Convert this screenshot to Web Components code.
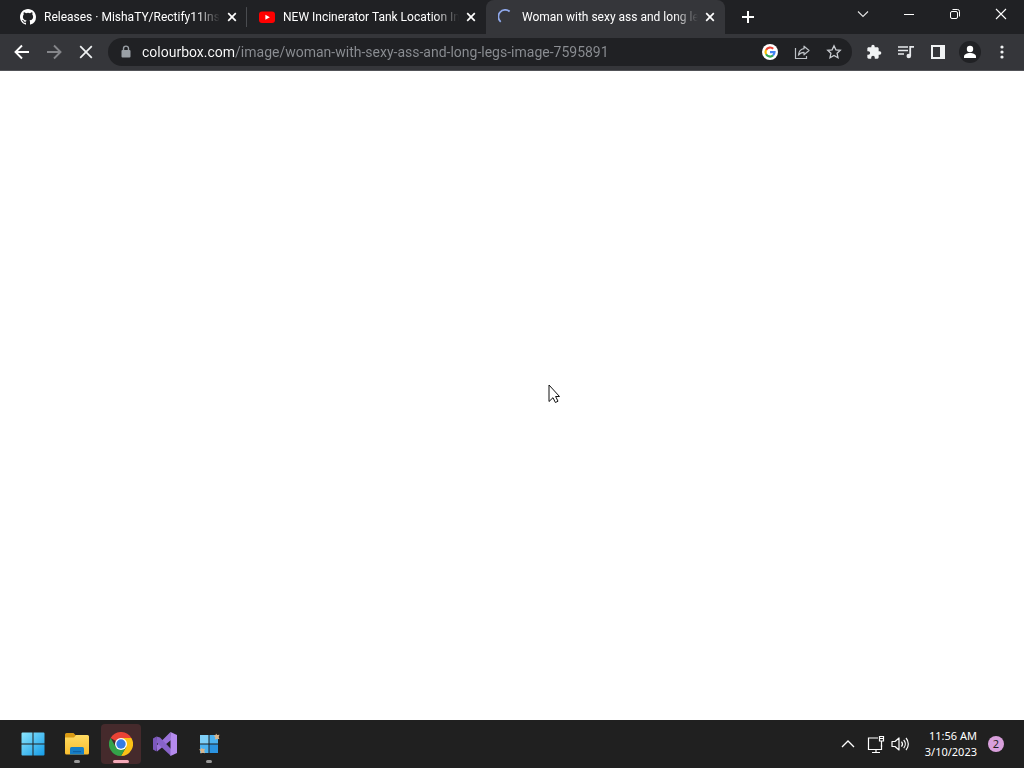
<!DOCTYPE html>
<html lang="en">
<head>
<meta charset="utf-8">
<title>Browser</title>
<style>
  html, body { margin: 0; height: 100%; }
  body { font-family: Roboto, "Noto Sans", sans-serif; background: #fff; }
</style>
</head>
<body>
<desktop-screen></desktop-screen>
<script>
const ICONS = {
  github: [16, '<path fill="#fff" d="M8 0C3.58 0 0 3.58 0 8c0 3.54 2.29 6.53 5.47 7.59.4.07.55-.17.55-.38 0-.19-.01-.82-.01-1.49-2.01.37-2.53-.49-2.69-.94-.09-.23-.48-.94-.82-1.13-.28-.15-.68-.52-.01-.53.63-.01 1.08.58 1.23.82.72 1.21 1.87.87 2.33.66.07-.52.28-.87.51-1.07-1.78-.2-3.64-.89-3.64-3.95 0-.87.31-1.59.82-2.15-.08-.2-.36-1.02.08-2.12 0 0 .67-.21 2.2.82a7.6 7.6 0 0 1 4 0c1.53-1.04 2.2-.82 2.2-.82.44 1.1.16 1.92.08 2.12.51.56.82 1.27.82 2.15 0 3.07-1.87 3.75-3.65 3.95.29.25.54.73.54 1.48 0 1.07-.01 1.93-.01 2.2 0 .21.15.46.55.38A8 8 0 0 0 16 8c0-4.42-3.58-8-8-8z"/>'],
  youtube: [16, '<rect y="2.5" width="16" height="11.5" rx="3" fill="#f00"/><path fill="#fff" d="M6.4 5.8v5L10.8 8.300z"/>'],
  spinner: [16, '<path d="M2.400 12.500A6.500 6.500 0 0 1 12 2.800" transform="rotate(-4 8 8)" fill="none" stroke="#8fa8ea" stroke-width="1.800"/>'],
  tabclose: [16, '<path d="M4.200 4.200l7.600 7.600M11.800 4.200l-7.600 7.600" stroke="#fff" stroke-width="1.700"/>'],
  plus: [16, '<path d="M8 2v12M2 8h12" stroke="#fff" stroke-width="2"/>'],
  down: [16, '<path d="M3 5.500l5 5 5-5" fill="none" stroke="#e4e4e4" stroke-width="1.100"/>'],
  min: [16, '<path d="M3 8.500h10" stroke="#fff"/>'],
  restore: [16, '<rect x="3.500" y="5.500" width="7" height="7" rx="1.500" fill="none" stroke="#fff"/><path d="M5.500 3.500h5a2 2 0 0 1 2 2v5" fill="none" stroke="#fff"/>'],
  close: [16, '<path d="M3 3l10 10M13 3L3 13" stroke="#fff" stroke-width="1.100"/>'],
  back: [16, '<path d="M15 8H2M8 1.500L1.500 8 8 14.500" fill="none" stroke="#fff" stroke-width="1.900"/>'],
  forward: [16, '<path d="M1 8h13M8 1.500L14.500 8 8 14.500" fill="none" stroke="#85868a" stroke-width="1.900"/>'],
  stop: [16, '<path d="M2.200 2.200l11.600 11.600M13.800 2.200L2.200 13.800" stroke="#f1f3f4" stroke-width="1.700"/>'],
  lock: [16, '<rect x="3.500" y="6" width="9" height="7.500" rx="1" fill="#9aa0a6"/><path d="M5.500 6.500V4.600a2.500 2.500 0 0 1 5 0v1.900" fill="none" stroke="#9aa0a6" stroke-width="1.400"/>'],
  google: [16, '<circle cx="8" cy="8" r="8" fill="#fff"/><g fill="none" stroke-width="2.200"><path d="M4.100 5.900A4.500 4.500 0 0 1 11.200 4.800" stroke="#ea4335"/><path d="M4.100 10.200a4.500 4.500 0 0 1 0-4.400" stroke="#fbbc05"/><path d="M11 11.400a4.500 4.500 0 0 1-6.900-1.200" stroke="#34a853"/><path d="M8 8.200h4.500a4.500 4.500 0 0 1-1.500 3.200" stroke="#4285f4"/></g>'],
  share: [16, '<path d="M1.500 4v10.500h11V12" fill="none" stroke="#bdc1c6" stroke-width="1.200"/><path d="M10 2.200L15 6.500l-5 4.300V8.400c-2.600 0-4.200.8-5.600 2.800.4-3.500 2.200-6 5.600-6.500z" fill="none" stroke="#bdc1c6" stroke-width="1.200" stroke-linejoin="round"/>'],
  star: [16, '<path d="M8 1.800l1.900 4 4.400.5-3.200 3 .9 4.400L8 11.500l-4 2.200.9-4.400-3.200-3 4.400-.5z" fill="none" stroke="#c8cbd0" stroke-width="1.300"/>'],
  puzzle: [24, '<path fill="#f1f3f4" d="M20.500 11H19V7c0-1.100-.9-2-2-2h-4V3.500a2.500 2.500 0 0 0-5 0V5H4c-1.100 0-2 .9-2 2v3.800h1.500a2.700 2.700 0 0 1 0 5.400H2V20c0 1.100.9 2 2 2h3.800v-1.500a2.700 2.700 0 0 1 5.400 0V22H17c1.100 0 2-.9 2-2v-4h1.500a2.500 2.500 0 0 0 0-5z"/>'],
  music: [16, '<path d="M0 3h10M0 6.500h10M0 10h6" stroke="#e8eaed" stroke-width="1.600"/><path d="M12.200 12V2.800H16" fill="none" stroke="#e8eaed" stroke-width="1.800"/><circle cx="10.800" cy="12" r="2.300" fill="#e8eaed"/>'],
  panel: [16, '<path fill="#f1f3f4" fill-rule="evenodd" d="M1 1h14v14H1zM3 3v10h7V3z"/>'],
  profile: [24, '<circle cx="12" cy="12" r="11" fill="#202124"/><circle cx="12" cy="9" r="3.200" fill="#fff"/><path d="M6 18v-1.500c0-2.200 3-3.500 6-3.500s6 1.300 6 3.500V18z" fill="#fff"/>'],
  dots: [16, '<g fill="#f1f3f4"><circle cx="8" cy="3" r="1.600"/><circle cx="8" cy="8" r="1.600"/><circle cx="8" cy="13" r="1.600"/></g>'],
  start: [24, '<defs><linearGradient id="g" x2="1" y2="1"><stop stop-color="#8be5fc"/><stop offset="1" stop-color="#149ce8"/></linearGradient></defs><path fill="url(#g)" d="M.5 1.500a1 1 0 0 1 1-1h10v11H.5zM12.500.500h10a1 1 0 0 1 1 1v10h-11zM.5 12.500h11v11h-10a1 1 0 0 1-1-1zM12.500 12.500h11v10a1 1 0 0 1-1 1h-10z"/>'],
  folder: [26, '<defs><linearGradient id="f" x2="0" y2="1"><stop stop-color="#ffdb62"/><stop offset="1" stop-color="#f9bd2e"/></linearGradient></defs><path d="M1 5V3.500A1.500 1.500 0 0 1 2.500 2h7L12 4.500V8H1z" fill="#d99a14"/><path d="M1 6.500h9L12 4h11.500A1.500 1.500 0 0 1 25 5.500V22a1.500 1.500 0 0 1-1.500 1.500h-21A1.500 1.500 0 0 1 1 22z" fill="url(#f)"/><path d="M6 23.500V17.500a1.500 1.500 0 0 1 1.500-1.500h11a1.500 1.500 0 0 1 1.500 1.500v6z" fill="#177fc6"/><path d="M9 20h8v1.200H9z" fill="#0f62a5"/>'],
  chrome: [24, '<path d="M12 12L1.600 6A12 12 0 0 1 22.400 6z" fill="#ea4335"/><path d="M12 6h10.400a12 12 0 0 1-10.400 18l5.200-9z" fill="#fbc116"/><path d="M1.600 6l5.200 9 5.200 3 5.200-3-5.200 9A12 12 0 0 1 1.600 6z" fill="#34a249"/><circle cx="12" cy="12" r="6" fill="#fff"/><circle cx="12" cy="12" r="4.700" fill="#347be4"/>'],
  vs: [24, '<path d="M17.500 0L10 7.500 3.500 13.500 4 19.500 18 8z" fill="#9b72da"/><path d="M0 6.500L3.500 4.500 4 10v4l-.5 5.500L0 17.500z" fill="#7c58bd"/><path d="M3.500 4.500L7 5.500 18 17v7L3.500 10.500z" fill="#8763c8"/><path d="M17.500 0L24 3v18l-6.500 3z" fill="#b58bee"/>'],
  tool: [24, '<path fill="#7fd0f8" d="M3 3h8.500v8.500H3z"/><path fill="#4bb2f0" d="M12.500 3H21v8.500h-8.500zM3 12.500h8.500V21H3z"/><path fill="#2b93e0" d="M12.500 12.500H21V21h-8.500z"/><path fill="#d9b58b" d="M19 1.500l1.200 1.600 2.300-.4-.8 2.300.8 2.300-2.200-.5L18 7.500l.3-2.200L16.500 3.500l2-.3zM4.500 15.500l1.200 1.600 2.300-.4-.8 2.300.8 2.300-2.200-.5-2.300.7.300-2.200L2 17.500l2-.3z"/>'],
  up: [16, '<path d="M2 11l6-6 6 6" fill="none" stroke="#fff" stroke-width="1.300"/>'],
  network: [20, '<path d="M12 4H2.500v11.500h13V11M6 18.500h8M10 15.500v3" fill="none" stroke="#fff" stroke-width="1.200"/><path d="M13.500 2.500h4v4.500h-4zM15.500 7v6M13.500 4.500h4" fill="none" stroke="#fff" stroke-width="1.200"/>'],
  sound: [20, '<path d="M2 7.500h3l4-3.500v12l-4-3.500H2z" fill="none" stroke="#fff" stroke-width="1.200" stroke-linejoin="round"/><path d="M11.500 7.500a4 4 0 0 1 0 5M13.700 5.800a6.500 6.500 0 0 1 0 8.400M16 4a9 9 0 0 1 0 12" fill="none" stroke="#fff" stroke-width="1.200"/>'],
  pointer: [20, '<path d="M1 1v16.500l4-3.800 2.400 4.800 2.600-1.300-2.400-4.700H11.500z" fill="#fff" stroke="#111"/>']
};

function define(name, html, setup) {
  const template = document.createElement('template');
  template.innerHTML = '<style>*{box-sizing:border-box}button{font:inherit;border:0;padding:0;background:none;color:inherit}</style>' + html;
  customElements.define(name, class extends HTMLElement {
    connectedCallback() {
      if (this.shadowRoot) return;
      this.attachShadow({ mode: 'open' }).append(template.content.cloneNode(true));
      if (setup) setup(this, this.shadowRoot);
    }
  });
}

define('ui-icon', `<style>:host{display:block;flex:none}svg{display:block}</style><svg></svg>`, (el, root) => {
  const [box, art] = ICONS[el.getAttribute('name')];
  const size = el.getAttribute('size') || 16;
  const svg = root.querySelector('svg');
  svg.setAttribute('viewBox', `0 0 ${box} ${box}`);
  svg.setAttribute('width', size);
  svg.setAttribute('height', size);
  svg.setAttribute('aria-hidden', 'true');
  svg.innerHTML = art;
});

define('icon-button', `<style>
  :host{display:block;flex:none;width:32px;height:28px}
  button{width:100%;height:100%;display:grid;place-items:center}
</style><button type="button"><slot></slot></button>`, (el, root) => {
  root.querySelector('button').setAttribute('aria-label', el.getAttribute('label'));
});

define('browser-tab', `<style>
  :host{display:flex;flex:0 1 239px;min-width:0;height:34px;padding:0 7px 0 12px;align-items:center;gap:4px;color:#fff;border-radius:8px 8px 0 0}
  :host([active]){background:#35363a}
  :host([divided]){background:linear-gradient(#4a4c50,#4a4c50) right center/1px 20px no-repeat}
  .tab{flex:1;min-width:0;display:flex;align-items:center;gap:8px;text-align:left;font-size:12px;line-height:20px}
  .title{flex:1;min-width:0;overflow:hidden;white-space:nowrap;-webkit-mask-image:linear-gradient(to left,transparent,#000 24px);mask-image:linear-gradient(to left,transparent,#000 24px)}
  icon-button{width:16px;height:16px}
</style>
<button class="tab" type="button" role="tab"><slot name="icon"></slot><span class="title"><slot></slot></span></button>
<icon-button label="Close tab"><ui-icon name="tabclose"></ui-icon></icon-button>`);

define('tab-strip', `<style>
  :host{display:flex;height:34px;background:#202124;padding-left:8px}
  .tabs{display:flex;flex:0 1 auto;min-width:0}
  .new{align-self:center;margin-left:7px}
  .window{display:flex;margin-left:auto}
  .window icon-button{width:46px}
</style>
<div class="tabs" role="tablist">
  <browser-tab divided><ui-icon slot="icon" name="github"></ui-icon>Releases · MishaTY/Rectify11Insta</browser-tab>
  <browser-tab><ui-icon slot="icon" name="youtube"></ui-icon>NEW Incinerator Tank Location In</browser-tab>
  <browser-tab active><ui-icon slot="icon" name="spinner"></ui-icon>Woman with sexy ass and long le</browser-tab>
</div>
<icon-button class="new" label="New tab"><ui-icon name="plus"></ui-icon></icon-button>
<div class="window">
  <icon-button label="Search tabs"><ui-icon name="down"></ui-icon></icon-button>
  <icon-button label="Minimize"><ui-icon name="min"></ui-icon></icon-button>
  <icon-button label="Restore"><ui-icon name="restore"></ui-icon></icon-button>
  <icon-button label="Close"><ui-icon name="close"></ui-icon></icon-button>
</div>`);

define('address-bar', `<style>
  :host{display:flex;flex:1;min-width:0;height:28px;align-items:center;gap:8px;padding:0 2px 0 10px;margin:0 6px;background:#202124;border-radius:14px}
  input{flex:1;min-width:0;border:0;padding:0;outline:0;font:14px/20px Roboto,"Noto Sans",sans-serif;color:#9aa0a6;
    background:linear-gradient(to right,#fff 93px,#8b8e93 93px);-webkit-background-clip:text;background-clip:text;-webkit-text-fill-color:transparent}
  .actions{display:flex}
</style>
<ui-icon name="lock"></ui-icon>
<input type="text" aria-label="Address" spellcheck="false" value="colourbox.com/image/woman-with-sexy-ass-and-long-legs-image-7595891">
<div class="actions">
  <icon-button label="Google"><ui-icon name="google"></ui-icon></icon-button>
  <icon-button label="Share"><ui-icon name="share"></ui-icon></icon-button>
  <icon-button label="Bookmark"><ui-icon name="star"></ui-icon></icon-button>
</div>`);

define('tool-bar', `<style>
  :host{display:flex;align-items:center;height:37px;padding:0 6px;background:#35363a;border-bottom:1px solid #515257}
</style>
<icon-button label="Back"><ui-icon name="back"></ui-icon></icon-button>
<icon-button label="Forward"><ui-icon name="forward"></ui-icon></icon-button>
<icon-button label="Stop"><ui-icon name="stop"></ui-icon></icon-button>
<address-bar></address-bar>
<icon-button label="Extensions"><ui-icon name="puzzle"></ui-icon></icon-button>
<icon-button label="Media"><ui-icon name="music"></ui-icon></icon-button>
<icon-button label="Side panel"><ui-icon name="panel"></ui-icon></icon-button>
<icon-button label="Profile"><ui-icon name="profile" size="24"></ui-icon></icon-button>
<icon-button label="Menu"><ui-icon name="dots"></ui-icon></icon-button>`);

define('task-item', `<style>
  :host{display:block;width:40px;height:40px;border-radius:4px}
  button{width:100%;height:100%;display:grid;place-items:center;position:relative}
  :host([active]){background:#452a2c}
  :host([running]) button::after{content:"";position:absolute;bottom:1px;left:50%;translate:-50%;width:6px;height:3px;border-radius:2px;background:#999}
  :host([active]) button::after{width:16px;background:#f4a9b8}
</style><button type="button"><slot></slot></button>`, (el, root) => {
  root.querySelector('button').setAttribute('aria-label', el.getAttribute('label'));
});

define('task-bar', `<style>
  :host{display:flex;align-items:center;height:48px;padding:0 20px 0 13px;background:#202020;color:#fff}
  .apps{display:flex;gap:4px}
  .tray{display:flex;align-items:center;margin-left:auto}
  .tray icon-button{width:24px}
  .tray .more{width:32px}
  .clock{margin-left:13px;font:11px/16px "Noto Sans","Open Sans",sans-serif;text-align:right}
  .badge{margin-left:11px;width:16px;height:16px;border-radius:50%;background:#d9a0dc;color:#222;font:11px/16px "Noto Sans","Open Sans",sans-serif;text-align:center}
</style>
<div class="apps">
  <task-item label="Start"><ui-icon name="start" size="24"></ui-icon></task-item>
  <task-item label="File Explorer" running><ui-icon name="folder" size="26"></ui-icon></task-item>
  <task-item label="Chrome" running active><ui-icon name="chrome" size="24"></ui-icon></task-item>
  <task-item label="Visual Studio"><ui-icon name="vs" size="24"></ui-icon></task-item>
  <task-item label="Installer" running><ui-icon name="tool" size="24"></ui-icon></task-item>
</div>
<div class="tray">
  <icon-button class="more" label="Hidden icons"><ui-icon name="up"></ui-icon></icon-button>
  <icon-button label="Network"><ui-icon name="network" size="20"></ui-icon></icon-button>
  <icon-button label="Volume"><ui-icon name="sound" size="20"></ui-icon></icon-button>
  <button type="button" class="clock">11:56 AM<br>3/10/2023</button>
  <button type="button" class="badge" aria-label="2 notifications">2</button>
</div>`);

define('desktop-screen', `<style>
  :host{display:flex;flex-direction:column;min-height:100vh}
  main{flex:1;background:#fff}
  .pointer{position:absolute;left:548px;top:384px}
</style>
<tab-strip></tab-strip>
<tool-bar></tool-bar>
<main></main>
<task-bar></task-bar>
<ui-icon class="pointer" name="pointer" size="20"></ui-icon>`);
</script>
</body>
</html>
